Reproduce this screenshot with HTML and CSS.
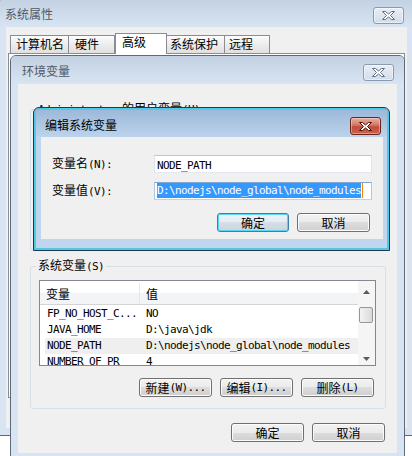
FILE: index.html
```html
<!DOCTYPE html>
<html lang="zh-CN">
<head>
  <meta charset="UTF-8">
  <title>环境变量</title>
  <link rel="stylesheet" href="styles.css">
</head>
<body>

  <!-- 系统属性 -->
  <div class="win sys">
    <div class="titlebar">
      <span class="title">系统属性</span>
      <span class="close"><svg width="13" height="9" viewBox="0 0 13 9"><path d="M.5.5h3l3 2.5 3-2.5h3l-4 4 4 4h-3l-3-2.5-3 2.5h-3l4-4z"/></svg></span>
    </div>
    <div class="client">
      <div class="tabs">
        <div class="tab t1">计算机名</div>
        <div class="tab t2">硬件</div>
        <div class="tab t3 on">高级</div>
        <div class="tab t4">系统保护</div>
        <div class="tab t5">远程</div>
      </div>
      <div class="tabpanel"></div>
    </div>
  </div>

  <!-- 环境变量 -->
  <div class="win env">
    <div class="titlebar">
      <span class="title">环境变量</span>
      <span class="close"><svg width="13" height="9" viewBox="0 0 13 9"><path d="M.5.5h3l3 2.5 3-2.5h3l-4 4 4 4h-3l-3-2.5-3 2.5h-3l4-4z"/></svg></span>
    </div>
    <div class="client">
      <fieldset class="group user-group">
        <legend><span class="a">Administrator </span>的用户变量<span class="a">(U)</span></legend>
      </fieldset>

      <fieldset class="group sys-group">
        <legend>系统变量<span class="a">(S)</span></legend>
        <div class="list">
          <div class="list-main">
            <div class="list-head">
              <div>变量</div>
              <div>值</div>
            </div>
            <div class="list-body">
              <div class="row"><span class="a">FP_NO_HOST_C...</span><span class="a">NO</span></div>
              <div class="row"><span class="a">JAVA_HOME</span><span class="a">D:\java\jdk</span></div>
              <div class="row sel"><span class="a">NODE_PATH</span><span class="a">D:\nodejs\node_global\node_modules</span></div>
              <div class="row"><span class="a">NUMBER_OF_PR</span><span class="a">4</span></div>
            </div>
          </div>
          <div class="scroll">
            <div class="sb-up"><svg width="7" height="4" viewBox="0 0 7 4"><path d="M0 4 3.5 0 7 4z"/></svg></div>
            <div class="thumb"></div>
            <div class="sb-down"><svg width="7" height="4" viewBox="0 0 7 4"><path d="M0 0h7L3.5 4z"/></svg></div>
          </div>
        </div>
        <div class="btns">
          <div class="btn">新建<span class="a">(W)...</span></div>
          <div class="btn">编辑<span class="a">(I)...</span></div>
          <div class="btn">删除<span class="a">(L)</span></div>
        </div>
      </fieldset>

      <div class="btns dlg-btns">
        <div class="btn">确定</div>
        <div class="btn">取消</div>
      </div>
    </div>
  </div>

  <!-- 编辑系统变量 -->
  <div class="win edit">
    <div class="titlebar">
      <span class="title">编辑系统变量</span>
      <span class="close"><svg width="13" height="9" viewBox="0 0 13 9"><path d="M.5.5h3l3 2.5 3-2.5h3l-4 4 4 4h-3l-3-2.5-3 2.5h-3l4-4z"/></svg></span>
    </div>
    <div class="client">
      <div class="field">
        <span>变量名<span class="a">(N):</span></span>
        <div class="input"><span class="a">NODE_PATH</span></div>
      </div>
      <div class="field">
        <span>变量值<span class="a">(V):</span></span>
        <div class="input focus"><span class="a picked">D:\nodejs\node_global\node_modules</span><span class="caret"></span></div>
      </div>
      <div class="btns edit-btns">
        <div class="btn default">确定</div>
        <div class="btn">取消</div>
      </div>
    </div>
  </div>

</body>
</html>
```

FILE: styles.css
```css
* {
  box-sizing: border-box;
}

body {
  margin: 0;
  width: 412px;
  height: 456px;
  overflow: hidden;
  position: relative;
  background: #fff;
  color: #000;
  font-family: "Noto Sans CJK SC", sans-serif;
  font-size: 12px;
  line-height: 14px;
}

/* ascii runs, narrow like SimSun */
.a {
  font-family: "DejaVu Sans Mono", monospace;
  font-size: 11px;
  letter-spacing: -0.62px;
}

/* windows */
.win {
  position: absolute;
  display: flex;
  flex-direction: column;
  border: 1px solid #5d6a7a;
  border-radius: 6px 6px 0 0;
  background: #d8e4f2;
  overflow: hidden;
}

.titlebar {
  flex: none;
  height: 28px;
  display: flex;
  justify-content: space-between;
  align-items: flex-start;
  padding: 0 10px 0 11px;
  background: linear-gradient(#c2d1e2, #d8e4f2);
}

.title {
  padding-top: 8px;
  color: #4d5968;
}

.close {
  margin-top: 8px;
  width: 31px;
  height: 17px;
  display: flex;
  align-items: center;
  justify-content: center;
  border: 1px solid #8a9bb1;
  border-radius: 3px;
  background: linear-gradient(#e8eef6, #d2ddea);
  box-shadow: inset 0 0 0 1px rgba(255, 255, 255, 0.5);
}

.close svg path {
  fill: #fff;
  stroke: #5d6f85;
  stroke-width: 1;
}

.client {
  flex: 1;
  margin: 0 7px 7px;
  background: #f0f0f0;
}

.sys {
  left: -2px;
  top: -2px;
  width: 417px;
  height: 438px;
}

.sys .titlebar {
  padding-left: 6px;
}

.env {
  left: 10px;
  top: 55px;
  width: 395px;
  height: 406px;
}

.edit {
  left: 33px;
  top: 107px;
  width: 357px;
  height: 144px;
  border-color: #22374d;
  background: #c0d6ee;
  box-shadow: inset 0 0 0 2px #4fc9e6;
}

.edit .titlebar {
  height: 27px;
  padding: 0 6px 0 9px;
  margin: 2px 2px 0;
  background: linear-gradient(#9db9d9, #bcd3ec);
}

.edit .title {
  padding-top: 8px;
  color: #000;
}

.edit .close {
  margin-top: 7px;
  height: 18px;
  border-color: #6b2418;
  background: linear-gradient(#eab0a4, #d27766 45%, #c14d38 55%, #c96350);
  box-shadow: inset 0 0 0 1px rgba(255, 220, 210, 0.45);
}

.edit .close svg path {
  stroke: #4a130a;
}

.edit .client {
  margin: 0 6px 11px 7px;
  padding: 18px 13px 0 11px;
}

/* tabs */
.tabs {
  position: relative;
  z-index: 1;
  display: flex;
  align-items: flex-end;
  height: 20px;
  margin: 6px 0 0 4px;
}

.tab {
  height: 18px;
  padding-left: 5px;
  line-height: 16px;
  border: 1px solid #898c95;
  border-bottom: none;
  background: linear-gradient(#fdfdfd, #ececec 50%, #e0e0e0);
}

.tab + .tab {
  border-left: none;
}

.t1 { width: 59px; }
.t2 { width: 46px; padding-left: 6px; }
.t3 { width: 52px; padding-left: 6px; }
.t4 { width: 58px; padding-left: 3px; }
.t5 { width: 45px; padding-left: 4px; }

.tab.on {
  height: 21px;
  margin-bottom: -1px;
  border-left: 1px solid #898c95;
  background: #fff;
}

.tab.on + .tab {
  border-left: none;
}

.tabpanel {
  width: 397px;
  height: 345px;
  margin-left: 2px;
  border: 1px solid #898c95;
  background: #fff;
}

/* group boxes */
.group {
  margin: 0 11px 0 12px;
  padding: 0 9px 11px 8px;
  border: 1px solid #d5dfe5;
  border-radius: 3px;
  min-width: 0;
}

.group legend {
  margin-left: -3px;
  padding: 0 2px;
  line-height: 14px;
}

.user-group {
  margin-top: 17px;
  height: 150px;
}

.sys-group {
  margin-top: 7px;
}

/* list view */
.list {
  display: flex;
  height: 86px;
  margin-top: 6px;
  border: 1px solid #828790;
  background: #fff;
}

.list-main {
  flex: 1;
  overflow: hidden;
}

.list-head {
  display: grid;
  grid-template-columns: 99px 1fr;
  height: 24px;
  padding-top: 2px;
  border-bottom: 1px solid #d5d5d5;
  background: linear-gradient(#fff 50%, #f3f4f6 50%);
}

.list-head div {
  padding-left: 6px;
  line-height: 21px;
}

.list-head div + div {
  border-left: 1px solid #e3e8ee;
}

.list-body {
  padding: 1px 0 0 5px;
}

.row {
  display: grid;
  grid-template-columns: 99px 1fr;
  height: 16px;
  line-height: 16px;
  white-space: nowrap;
}

.row span {
  padding-left: 2px;
}

.row.sel {
  background: #efefef;
}

.scroll {
  flex: none;
  width: 17px;
  display: flex;
  flex-direction: column;
  background: #f5f5f5;
}

.sb-up,
.sb-down {
  display: flex;
  justify-content: center;
}

.sb-up {
  height: 20px;
  align-items: center;
  padding-top: 1px;
}

.sb-down {
  margin-top: auto;
  height: 13px;
  align-items: center;
}

.scroll svg path {
  fill: #5a5a5a;
}

.thumb {
  width: 14px;
  height: 16px;
  margin: 6px 0 0 1px;
  border: 1px solid #979797;
  border-radius: 2px;
  background: linear-gradient(to right, #f4f4f4, #dadada);
}

/* buttons */
.btns {
  display: flex;
  justify-content: flex-end;
  gap: 8px;
  margin: 12px 2px 0 0;
}

.dlg-btns {
  margin: 14px 12px 0 0;
}

.edit-btns {
  margin: 13px 0 0 0;
}

.btn {
  width: 73px;
  height: 19px;
  display: flex;
  align-items: center;
  justify-content: center;
  border: 1px solid #707070;
  border-radius: 3px;
  background: linear-gradient(#f2f2f2, #ebebeb 50%, #dddddd 50%, #cfcfcf);
  box-shadow: inset 0 0 0 1px #fbfbfb;
  white-space: nowrap;
}

.btn.default {
  width: 72px;
  border-color: #3c7fb1;
  background: linear-gradient(#eef3f7, #e4ebf1 50%, #d6dfe7 50%, #cbd5de);
  box-shadow: inset 0 0 0 1px #59d4f3;
}

/* edit fields */
.field {
  display: grid;
  grid-template-columns: 102px 218px;
  align-items: center;
}

.field + .field {
  margin-top: 9px;
}

.input {
  height: 18px;
  padding-left: 2px;
  line-height: 16px;
  border: 1px solid;
  border-color: #c3c5ca #e2e3ea #e3e9ef #e2e3ea;
  background: #fff;
  white-space: nowrap;
  overflow: hidden;
}

.input.focus {
  border-color: #7ea6cf #a9c8e7 #b7d6ee #a9c8e7;
}

.picked {
  display: inline-block;
  vertical-align: top;
  height: 15px;
  line-height: 15px;
  background: #3399ff;
  color: #fff;
}

.caret {
  display: inline-block;
  vertical-align: top;
  width: 1px;
  height: 15px;
  margin-left: 1px;
  background: #f28a00;
}
```
